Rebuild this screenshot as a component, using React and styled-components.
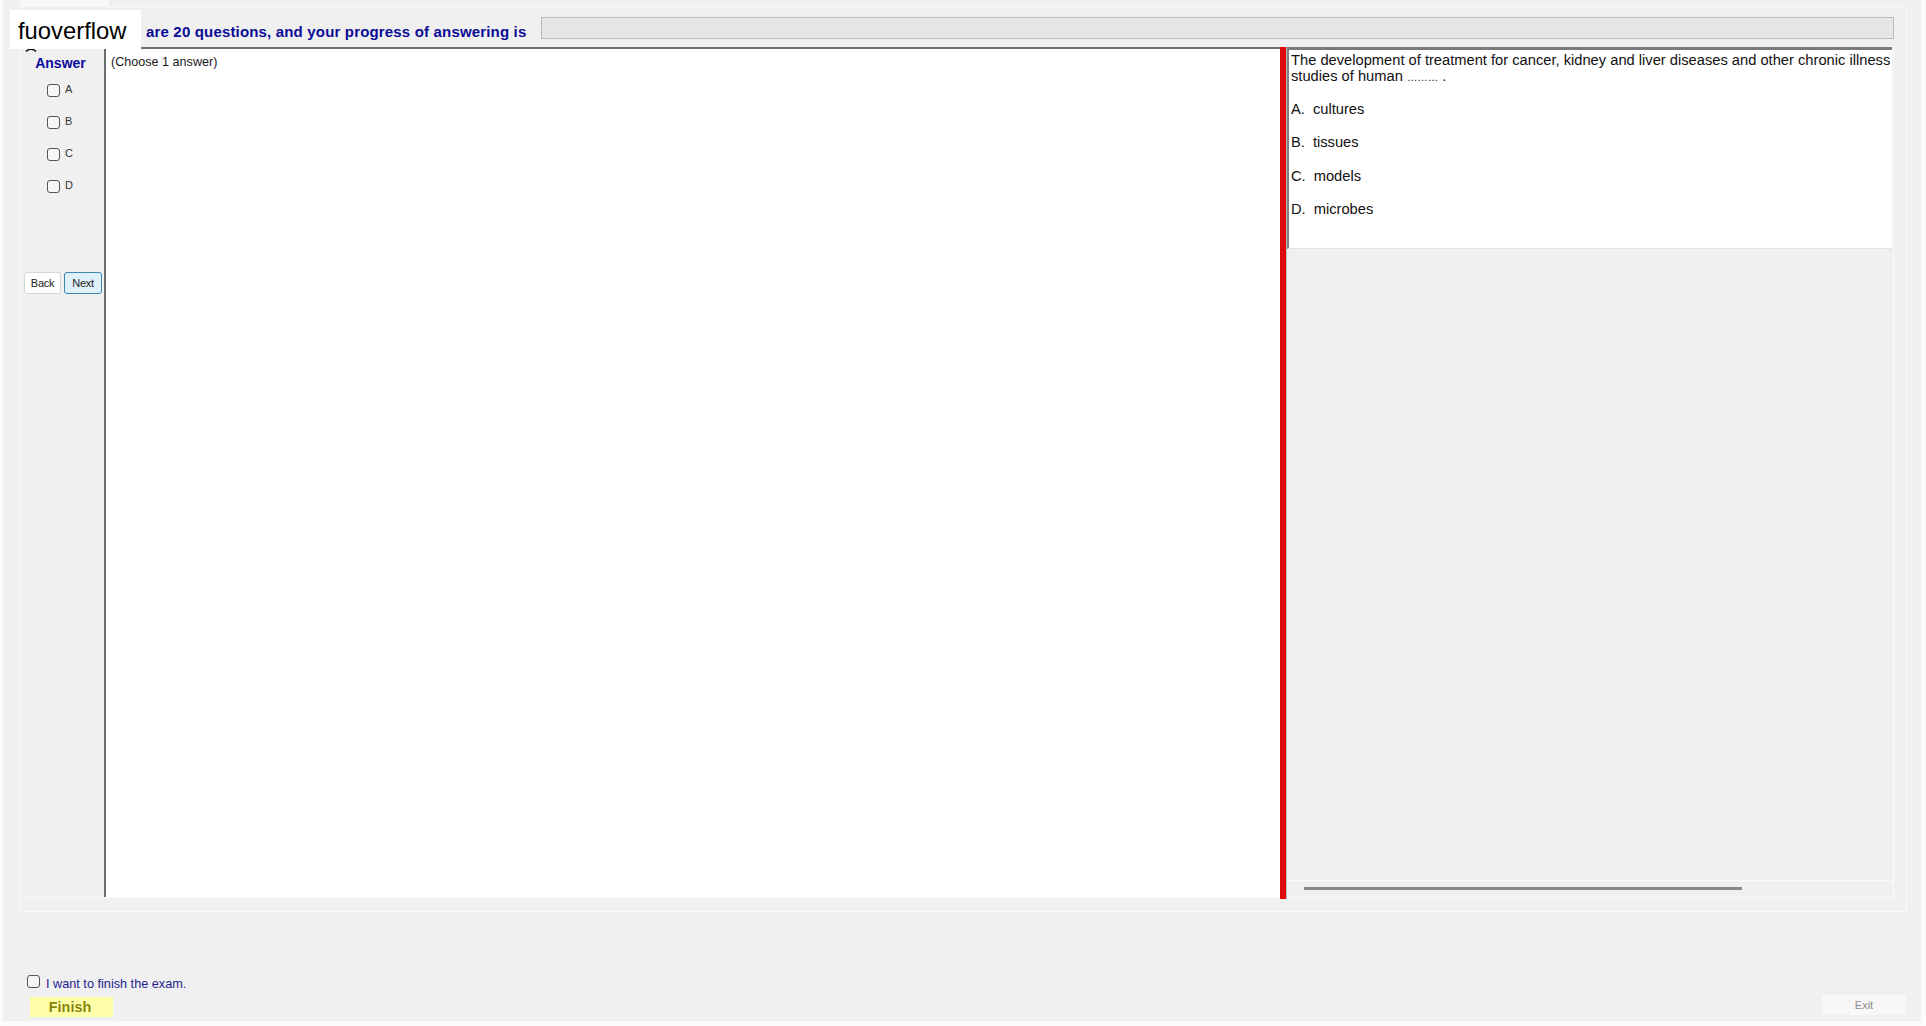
import React from "react";
import styled, { createGlobalStyle } from "styled-components";

const Global = createGlobalStyle`
  html, body { margin: 0; padding: 0; background: #fbfbfb; }
  body { font-family: "Liberation Sans", Arial, sans-serif; color: #111; overflow: hidden; }
`;

const Win = styled.div`
  position: relative;
  box-sizing: border-box;
  margin-left: 3px;
  width: 1918px;
  height: 1021px;
  background: #f0f0f0;
  display: flex;
  flex-direction: column;
`;

const TabStrip = styled.div`
  height: 6px;
  padding-left: 17px;
  display: flex;
`;

const Tab = styled.div`
  width: 90px;
  height: 6px;
  background: #f7f7f7;
  border-right: 1px solid #e2e2e2;
`;

const TabPanel = styled.div`
  box-sizing: border-box;
  margin-left: 17px;
  width: 1887px;
  height: 906px;
  border: 1px solid #f8f8f8;
  padding: 10px 12px 0 1px;
  display: flex;
  flex-direction: column;
  gap: 8px;
`;

const Header = styled.div`
  height: 22px;
  display: flex;
  align-items: flex-start;
  padding-left: 124px;
`;

const HeaderText = styled.span`
  width: 395px;
  margin-top: 7px;
  font-size: 15px;
  letter-spacing: 0.17px;
  line-height: 16px;
  font-weight: 700;
  color: #0a0a96;
  white-space: nowrap;
`;

const Progress = styled.div`
  flex: 1;
  height: 22px;
  box-sizing: border-box;
  background: #e6e6e6;
  border: 1px solid #bcbcbc;
`;

const Watermark = styled.div`
  position: absolute;
  left: 7px;
  top: 10px;
  width: 131px;
  height: 39px;
  background: #fff;
  color: #000;
  font-size: 23.8px;
  line-height: 42px;
  padding-left: 8px;
  box-sizing: border-box;
`;

const Arc = styled.svg`
  position: absolute;
  left: 22px;
  top: 48px;
  width: 12px;
  height: 4px;
`;

const Row = styled.div`
  height: 850px;
  display: flex;
  border-bottom: 1px solid #fafafa;
`;

const Sidebar = styled.div`
  width: 82px;
  display: flex;
  flex-direction: column;
`;

const SideTitle = styled.div`
  margin-top: 8px;
  padding-right: 5px;
  text-align: center;
  font-size: 14px;
  line-height: 16px;
  font-weight: 700;
  color: #0a0a9c;
`;

const Options = styled.div`
  margin-top: 13px;
  padding-left: 25px;
  display: flex;
  flex-direction: column;
  gap: 19px;
`;

const Option = styled.label`
  height: 13px;
  display: flex;
  align-items: center;
  gap: 5px;
  font-size: 11px;
  color: #333;
`;

const OptionLetter = styled.span`
  margin-top: -3px;
  line-height: 13px;
`;

const Check = styled.input.attrs({ type: "checkbox" })`
  appearance: none;
  margin: 0;
  flex: none;
  width: 13px;
  height: 13px;
  box-sizing: border-box;
  border: 1px solid #555;
  border-radius: 3px;
  background: #f6f6f6;
`;

const NavRow = styled.div`
  margin-top: 79px;
  padding-left: 2px;
  display: flex;
  gap: 3px;
`;

const NavButton = styled.button`
  box-sizing: border-box;
  width: ${(p) => (p.$active ? "38px" : "37px")};
  height: 22px;
  padding: 0;
  font: 11px/20px "Liberation Sans", Arial, sans-serif;
  letter-spacing: -0.3px;
  color: #222;
  border-radius: 3px;
  background: ${(p) => (p.$active ? "#dff0fb" : "#ffffff")};
  border: 1px solid ${(p) => (p.$active ? "#3f86ad" : "#d6d6d6")};
`;

const Main = styled.div`
  width: 1176px;
  box-sizing: border-box;
  background: #fff;
  border-left: 2px solid #6e6e6e;
  border-top: 2px solid #6e6e6e;
  padding: 6px 0 0 5px;
  font-size: 12.6px;
  line-height: 15px;
  color: #1a1a1a;
`;

const RedBar = styled.div`
  flex: none;
  width: 6px;
  height: 852px;
  background: #dc0a0a;
  border-right: 1px solid #bdbdbd;
`;

const RightCol = styled.div`
  flex: 1;
  min-width: 0;
  display: flex;
  flex-direction: column;
  border-right: 1px solid #fafafa;
`;

const QuestionBox = styled.div`
  box-sizing: border-box;
  height: 202px;
  margin-right: 1px;
  background: #fff;
  border-left: 2px solid #808080;
  border-top: 3px solid #7a7a7a;
  border-bottom: 1px solid #e4e4e4;
  padding: 2px 0 0 2px;
  overflow: hidden;
  white-space: nowrap;
  font-size: 14.7px;
  line-height: 16px;
  color: #111;
`;

const Line = styled.div``;

const Dots = styled.span`
  font-size: 10.4px;
`;

const Answer = styled.div`
  display: flex;
  gap: 8px;
  height: 33.4px;
`;

const Answers = styled.div`
  margin-top: 15px;
  display: flex;
  flex-direction: column;
`;

const Spacer = styled.div`
  flex: 1;
`;

const ScrollArea = styled.div`
  height: 17px;
  box-sizing: border-box;
  border-top: 1px solid #fafafa;
  padding: 6px 0 0 17px;
`;

const ScrollThumb = styled.div`
  width: 438px;
  height: 3px;
  background: #888;
`;

const Footer = styled.div`
  flex: 1;
  display: flex;
  flex-direction: column;
  padding: 63px 0 0 24px;
`;

const FinishLine = styled.label`
  display: flex;
  align-items: flex-start;
  gap: 6px;
  height: 14px;
  font-size: 12.7px;
  line-height: 19px;
  color: #1c1c8c;
`;

const FootRow = styled.div`
  margin-top: 6px;
  display: flex;
  justify-content: space-between;
  align-items: flex-start;
  padding: 0 15px 0 3px;
`;

const Finish = styled.button`
  width: 83px;
  height: 20px;
  margin-top: 2px;
  border: 0;
  padding: 0 3px 0 0;
  background: #ffffaa;
  color: #85850a;
  font: 700 14.4px/20px "Liberation Sans", Arial, sans-serif;
`;

const Exit = styled.button`
  width: 84px;
  height: 20px;
  border: 0;
  padding: 0;
  background: #f7f7f7;
  color: #8c8c8c;
  font: 11px/20px "Liberation Sans", Arial, sans-serif;
`;

export default function App() {
  return (
    <>
      <Global />
      <Win>
        <TabStrip>
          <Tab />
        </TabStrip>
        <TabPanel>
          <Header>
            <HeaderText>are 20 questions, and your progress of answering is</HeaderText>
            <Progress />
          </Header>
          <Row>
            <Sidebar>
              <SideTitle>Answer</SideTitle>
              <Options>
                {["A", "B", "C", "D"].map((l) => (
                  <Option key={l}>
                    <Check />
                    <OptionLetter>{l}</OptionLetter>
                  </Option>
                ))}
              </Options>
              <NavRow>
                <NavButton>Back</NavButton>
                <NavButton $active>Next</NavButton>
              </NavRow>
            </Sidebar>
            <Main>(Choose 1 answer)</Main>
            <RedBar />
            <RightCol>
              <QuestionBox>
                <Line>The development of treatment for cancer, kidney and liver diseases and other chronic illness</Line>
                <Line>
                  studies of human <Dots>………</Dots> .
                </Line>
                <Answers>
                  {[
                    ["A.", "cultures"],
                    ["B.", "tissues"],
                    ["C.", "models"],
                    ["D.", "microbes"],
                  ].map(([a, b]) => (
                    <Answer key={a}>
                      <span>{a}</span>
                      <span>{b}</span>
                    </Answer>
                  ))}
                </Answers>
              </QuestionBox>
              <Spacer />
              <ScrollArea>
                <ScrollThumb />
              </ScrollArea>
            </RightCol>
          </Row>
        </TabPanel>
        <Footer>
          <FinishLine>
            <Check />
            I want to finish the exam.
          </FinishLine>
          <FootRow>
            <Finish>Finish</Finish>
            <Exit>Exit</Exit>
          </FootRow>
        </Footer>
        <Arc viewBox="0 0 12 4">
          <path d="M1 3.5 C3 0.5 9 0.5 11 3.5" fill="none" stroke="#111" strokeWidth="1.5" />
        </Arc>
        <Watermark>fuoverflow</Watermark>
      </Win>
    </>
  );
}
